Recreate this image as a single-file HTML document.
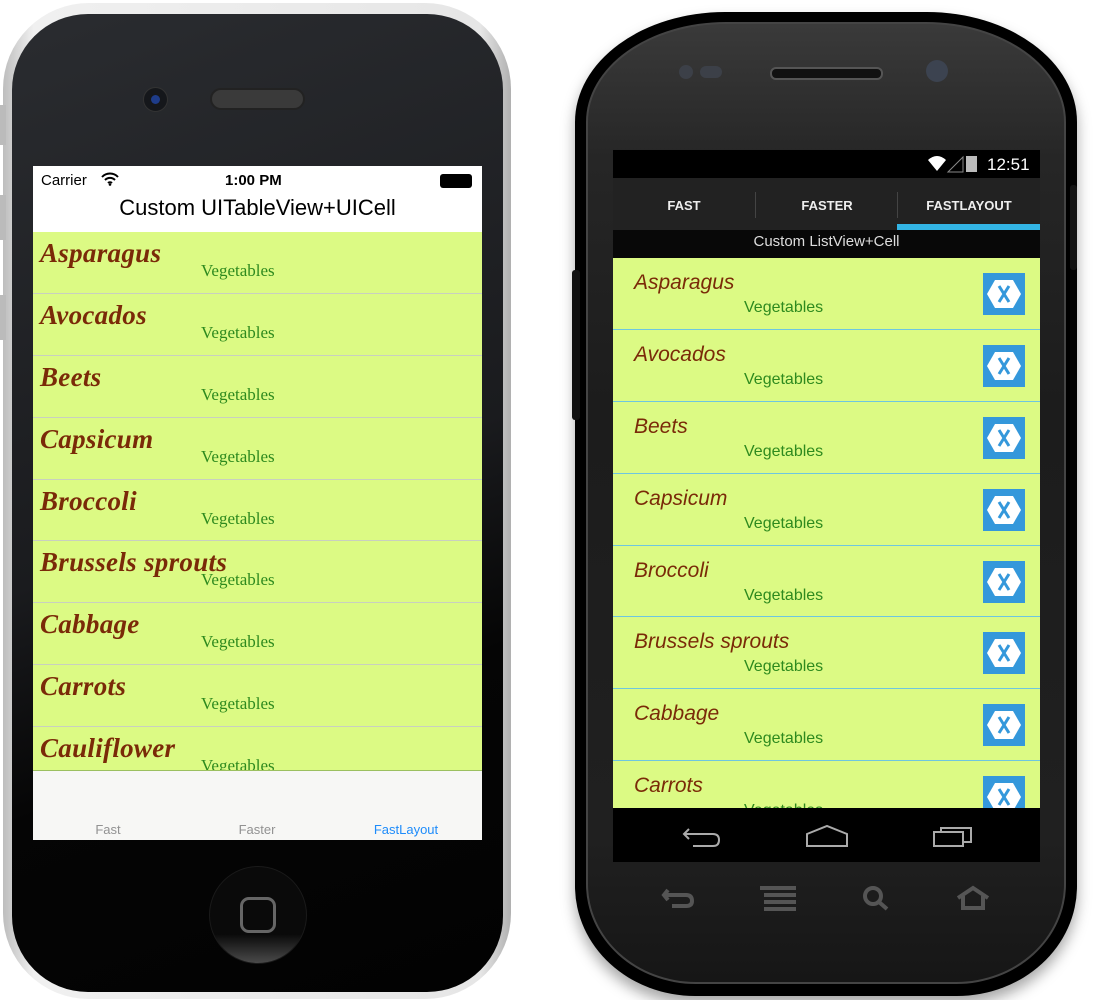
<!DOCTYPE html>
<html><head><style>
*{margin:0;padding:0;box-sizing:border-box}
body{width:1097px;height:1000px;background:#fff;position:relative;overflow:hidden;font-family:"Liberation Sans",sans-serif}
.a{position:absolute}
.ir{position:absolute;left:33px;width:449px;height:62px;background:#dcfa84;border-bottom:1px solid #c9cfc0}
.ir .n{position:absolute;left:7px;top:6px;font:italic bold 27px "Liberation Serif",serif;color:#7a2a08;white-space:nowrap;letter-spacing:0.3px}
.ir .v{position:absolute;left:168px;top:29px;font:17px "Liberation Serif",serif;color:#2e8a1e}
.ar{position:absolute;left:613px;width:427px;height:72px;background:#dcfa84;border-bottom:1px solid #6ec6e0}
.ar .n{position:absolute;left:21px;top:13px;font:italic 21px "Liberation Sans",sans-serif;color:#7a2a08}
.ar .v{position:absolute;left:131px;top:41px;font:16px "Liberation Sans",sans-serif;color:#2e8a1e}
.ar svg{position:absolute;left:370px;top:15px}
</style></head><body>
<!-- iPhone -->
<div class="a" style="left:3px;top:3px;width:508px;height:996px;border-radius:86px;background:linear-gradient(90deg,#bdbdbd,#f0f0f0 6%,#e6e6e6 94%,#b0b0b0)"></div>
<div class="a" style="left:0;top:105px;width:6px;height:40px;background:#bbb"></div>
<div class="a" style="left:0;top:195px;width:6px;height:45px;background:#bbb"></div>
<div class="a" style="left:0;top:295px;width:6px;height:45px;background:#bbb"></div>
<div class="a" style="left:12px;top:14px;width:491px;height:978px;border-radius:76px;background:linear-gradient(160deg,#2a2c30,#1a1b1e 50%,#050505 70%,#020202)"></div>
<div class="a" style="left:143px;top:87px;width:25px;height:25px;border-radius:50%;background:#15171b;border:1px solid #333"></div>
<div class="a" style="left:151px;top:95px;width:9px;height:9px;border-radius:50%;background:#1e3c8a"></div>
<div class="a" style="left:210px;top:88px;width:95px;height:22px;border-radius:11px;background:#3a3a3a;border:2px solid #222"></div>
<div class="a" style="left:33px;top:166px;width:449px;height:66px;background:#fff"></div>
<div class="a" style="left:41px;top:172px;font-size:15px;color:#000">Carrier</div>
<svg class="a" style="left:101px;top:172px" width="18" height="14" viewBox="0 0 18 14"><path d="M1 5 A11 11 0 0 1 17 5 M4 8 A7 7 0 0 1 14 8 M7 11 A3 3 0 0 1 11 11" stroke="#000" stroke-width="2" fill="none"/><circle cx="9" cy="12.5" r="1.3"/></svg>
<div class="a" style="left:225px;top:172px;font-size:15px;font-weight:bold;color:#000">1:00 PM</div>
<div class="a" style="left:440px;top:174px;width:32px;height:14px;border-radius:3px;background:#000"></div>
<div class="a" style="left:33px;top:195px;width:449px;text-align:center;font-size:22px;color:#000">Custom UITableView+UICell</div>
<div class="ir" style="top:232px"><div class="n">Asparagus</div><div class="v">Vegetables</div></div>
<div class="ir" style="top:294px"><div class="n">Avocados</div><div class="v">Vegetables</div></div>
<div class="ir" style="top:356px"><div class="n">Beets</div><div class="v">Vegetables</div></div>
<div class="ir" style="top:418px"><div class="n">Capsicum</div><div class="v">Vegetables</div></div>
<div class="ir" style="top:480px;height:61px"><div class="n">Broccoli</div><div class="v">Vegetables</div></div>
<div class="ir" style="top:541px"><div class="n">Brussels sprouts</div><div class="v">Vegetables</div></div>
<div class="ir" style="top:603px"><div class="n">Cabbage</div><div class="v">Vegetables</div></div>
<div class="ir" style="top:665px"><div class="n">Carrots</div><div class="v">Vegetables</div></div>
<div class="ir" style="top:727px;height:44px;overflow:hidden;border-bottom:1px solid #9cc060"><div class="n">Cauliflower</div><div class="v">Vegetables</div></div>
<div class="a" style="left:33px;top:771px;width:449px;height:69px;background:#f7f7f5"></div>
<div class="a" style="left:33px;top:822px;width:150px;text-align:center;font-size:13px;color:#929292">Fast</div>
<div class="a" style="left:182px;top:822px;width:150px;text-align:center;font-size:13px;color:#929292">Faster</div>
<div class="a" style="left:331px;top:822px;width:150px;text-align:center;font-size:13px;color:#1e8cfa">FastLayout</div>
<div class="a" style="left:209px;top:866px;width:98px;height:98px;border-radius:50%;background:linear-gradient(180deg,#0a0a0a 70%,#4a4a4a);border:1px solid #1a1a1a"></div>
<div class="a" style="left:240px;top:897px;width:36px;height:36px;border-radius:9px;border:3px solid #666"></div>
<!-- Android -->
<div class="a" style="left:575px;top:12px;width:502px;height:984px;border-radius:150px 150px 120px 120px / 110px 110px 110px 110px;background:#000;box-shadow:0 8px 14px rgba(0,0,0,.35)"></div>
<div class="a" style="left:572px;top:270px;width:8px;height:150px;background:#111;border-radius:3px"></div>
<div class="a" style="left:1070px;top:185px;width:7px;height:85px;background:#111;border-radius:3px"></div>
<div class="a" style="left:586px;top:22px;width:480px;height:962px;border-radius:140px 140px 110px 110px / 100px 100px 100px 100px;border:2px solid #444;background:linear-gradient(180deg,#3a3a3a,#262626 14%,#1c1c1c 40%,#202020 85%,#161616)"></div>
<div class="a" style="left:679px;top:65px;width:14px;height:14px;border-radius:50%;background:#3c4048"></div>
<div class="a" style="left:700px;top:66px;width:22px;height:12px;border-radius:6px;background:#3c4048"></div>
<div class="a" style="left:770px;top:67px;width:113px;height:13px;border-radius:6px;background:#111;border:2px solid #555"></div>
<div class="a" style="left:926px;top:60px;width:22px;height:22px;border-radius:50%;background:#3c4350"></div>
<div class="a" style="left:613px;top:150px;width:427px;height:28px;background:#000"></div>
<svg class="a" style="left:925px;top:153px" width="110" height="22" viewBox="0 0 110 22"><path d="M3 7 Q12 -1 21 7 L12 18Z" fill="#fff"/><path d="M23 19 L38 4 L38 19Z" fill="none" stroke="#888"/><rect x="41" y="3" width="11" height="16" fill="#bbb"/><text x="62" y="17" fill="#fff" font-family="Liberation Sans" font-size="17">12:51</text></svg>
<div class="a" style="left:613px;top:178px;width:427px;height:52px;background:#222"></div>
<div class="a" style="left:755px;top:192px;width:1px;height:26px;background:#444"></div>
<div class="a" style="left:897px;top:192px;width:1px;height:26px;background:#444"></div>
<div class="a" style="left:613px;top:198px;width:142px;text-align:center;font-size:13px;font-weight:bold;color:#eee">FAST</div>
<div class="a" style="left:756px;top:198px;width:142px;text-align:center;font-size:13px;font-weight:bold;color:#eee">FASTER</div>
<div class="a" style="left:898px;top:198px;width:142px;text-align:center;font-size:13px;font-weight:bold;color:#eee">FASTLAYOUT</div>
<div class="a" style="left:897px;top:224px;width:143px;height:6px;background:#33b5e5"></div>
<div class="a" style="left:613px;top:230px;width:427px;height:28px;background:#080808"></div>
<div class="a" style="left:613px;top:233px;width:427px;text-align:center;font-size:15px;color:#ddd">Custom ListView+Cell</div>
<div class="ar" style="top:258px"><div class="n">Asparagus</div><div class="v">Vegetables</div><svg width="42" height="42"><rect width="42" height="42" fill="#3498db"/><path d="M12 7H30L38 21L30 35H12L4 21Z" fill="#fff"/><path d="M16 13L26 29M26 13L16 29" stroke="#3498db" stroke-width="3"/></svg></div>
<div class="ar" style="top:330px"><div class="n">Avocados</div><div class="v">Vegetables</div><svg width="42" height="42"><rect width="42" height="42" fill="#3498db"/><path d="M12 7H30L38 21L30 35H12L4 21Z" fill="#fff"/><path d="M16 13L26 29M26 13L16 29" stroke="#3498db" stroke-width="3"/></svg></div>
<div class="ar" style="top:402px"><div class="n">Beets</div><div class="v">Vegetables</div><svg width="42" height="42"><rect width="42" height="42" fill="#3498db"/><path d="M12 7H30L38 21L30 35H12L4 21Z" fill="#fff"/><path d="M16 13L26 29M26 13L16 29" stroke="#3498db" stroke-width="3"/></svg></div>
<div class="ar" style="top:474px"><div class="n">Capsicum</div><div class="v">Vegetables</div><svg width="42" height="42"><rect width="42" height="42" fill="#3498db"/><path d="M12 7H30L38 21L30 35H12L4 21Z" fill="#fff"/><path d="M16 13L26 29M26 13L16 29" stroke="#3498db" stroke-width="3"/></svg></div>
<div class="ar" style="top:546px;height:71px"><div class="n">Broccoli</div><div class="v">Vegetables</div><svg width="42" height="42"><rect width="42" height="42" fill="#3498db"/><path d="M12 7H30L38 21L30 35H12L4 21Z" fill="#fff"/><path d="M16 13L26 29M26 13L16 29" stroke="#3498db" stroke-width="3"/></svg></div>
<div class="ar" style="top:617px"><div class="n">Brussels sprouts</div><div class="v">Vegetables</div><svg width="42" height="42"><rect width="42" height="42" fill="#3498db"/><path d="M12 7H30L38 21L30 35H12L4 21Z" fill="#fff"/><path d="M16 13L26 29M26 13L16 29" stroke="#3498db" stroke-width="3"/></svg></div>
<div class="ar" style="top:689px"><div class="n">Cabbage</div><div class="v">Vegetables</div><svg width="42" height="42"><rect width="42" height="42" fill="#3498db"/><path d="M12 7H30L38 21L30 35H12L4 21Z" fill="#fff"/><path d="M16 13L26 29M26 13L16 29" stroke="#3498db" stroke-width="3"/></svg></div>
<div class="ar" style="top:761px;height:48px;overflow:hidden;border:none"><div class="n">Carrots</div><div class="v">Vegetables</div><svg width="42" height="42"><rect width="42" height="42" fill="#3498db"/><path d="M12 7H30L38 21L30 35H12L4 21Z" fill="#fff"/><path d="M16 13L26 29M26 13L16 29" stroke="#3498db" stroke-width="3"/></svg></div>
<div class="a" style="left:613px;top:808px;width:427px;height:54px;background:#000"></div>
<svg class="a" style="left:613px;top:808px" width="427" height="54" viewBox="0 0 427 54"><g fill="none" stroke="#aaa" stroke-width="2"><path d="M76 21L71 26L76 31M71 26H100Q106 26 106 32Q106 38 100 38H80"/><path d="M194 26L214 18L234 26V38H194Z"/><path d="M321 24H350V38H321Z M328 24V20H358V34H350"/></g></svg>
<svg class="a" style="left:660px;top:880px" width="340" height="40" viewBox="0 0 340 40"><g fill="none" stroke="#555" stroke-width="4"><path d="M8 10L4 15L8 20M4 15H26Q32 15 32 21Q32 26 26 26H12"/><path d="M100 8H136M104 15H136M104 22H136M104 29H136"/><circle cx="213" cy="16" r="8"/><path d="M219 22L227 29"/><path d="M298 18L313 8L328 18M303 16V28H323V16"/></g></svg>
</body></html>
